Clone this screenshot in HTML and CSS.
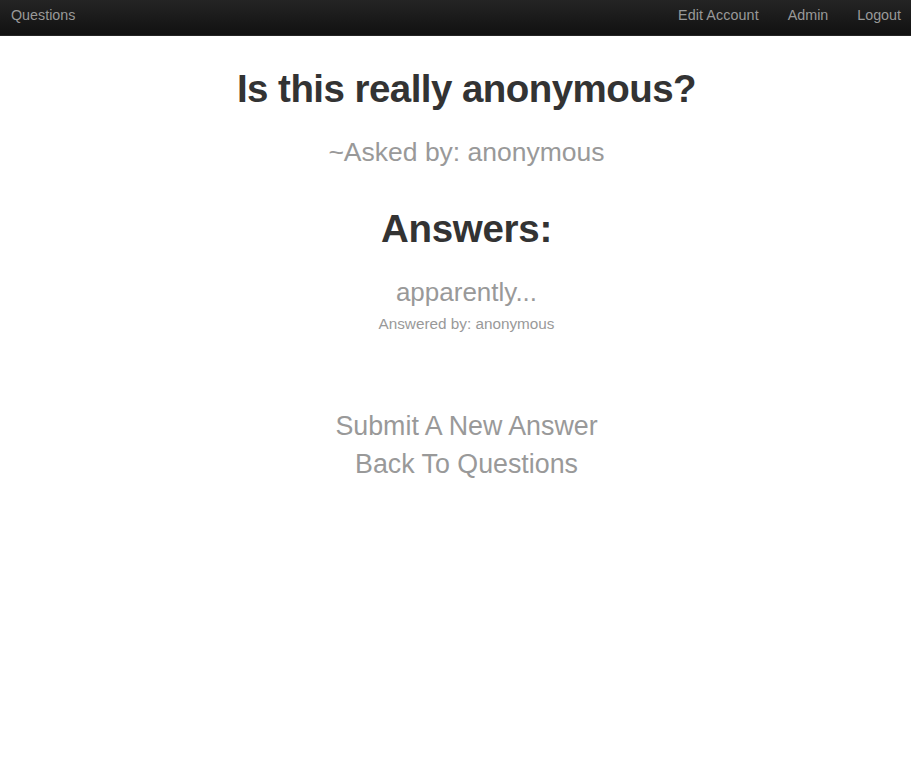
FILE: index.html
```html
<!DOCTYPE html>
<html>
<head>
<meta charset="utf-8">
<link rel="stylesheet" href="styles.css">
</head>
<body>
<div class="navbar">
  <a class="brand" href="#">Questions</a>
  <ul class="nav">
    <li><a href="#">Edit Account</a></li>
    <li><a href="#">Admin</a></li>
    <li><a href="#">Logout</a></li>
  </ul>
</div>
<main class="content">
  <h1 class="title">Is this really anonymous?</h1>
  <h3 class="asked">~Asked by: anonymous</h3>
  <h1 class="answers">Answers:</h1>
  <div class="answer">
    <h3 class="answer-text">apparently...</h3>
    <div class="answer-by">Answered by: anonymous</div>
  </div>
  <div class="links">
    <a href="#">Submit A New Answer</a>
    <a href="#">Back To Questions</a>
  </div>
</main>
</body>
</html>
```
FILE: styles.css
```css
html, body {
  margin: 0;
  padding: 0;
  background: #fff;
  font-family: "Liberation Sans", Arial, sans-serif;
}
.navbar {
  height: 36px;
  background: linear-gradient(#242424, #111111);
  border-bottom: 1px solid #252525;
  box-sizing: border-box;
  display: flex;
  align-items: flex-start;
  justify-content: space-between;
  padding: 5px 10px 0 11px;
}
.navbar a {
  color: #999;
  text-decoration: none;
  font-size: 14.3px;
  line-height: 20px;
  letter-spacing: 0;
}
.nav {
  list-style: none;
  margin: 0;
  padding: 0;
  display: flex;
  gap: 29px;
}
.nav li:first-child a {
  letter-spacing: 0.1px;
}
.content {
  display: flex;
  flex-direction: column;
  align-items: center;
  color: #999;
  padding-left: 22px;
}
.title {
  margin: 31px 0 0;
  font-size: 38.5px;
  line-height: 44px;
  color: #333;
  font-weight: bold;
  letter-spacing: -0.55px;
}
.asked {
  margin: 26px 0 0;
  font-size: 26.5px;
  line-height: 30px;
  font-weight: normal;
  letter-spacing: 0;
}
.answers {
  margin: 40px 0 0;
  font-size: 38.5px;
  line-height: 44px;
  color: #333;
  font-weight: bold;
  letter-spacing: -0.3px;
}
.answer {
  display: flex;
  flex-direction: column;
  align-items: center;
  margin-top: 26px;
}
.answer-text {
  margin: 0;
  font-size: 26px;
  line-height: 30px;
  font-weight: normal;
  letter-spacing: 0;
}
.answer-by {
  margin-top: 7px;
  font-size: 15.3px;
  line-height: 20px;
  letter-spacing: 0;
}
.links {
  margin-top: 73px;
  display: flex;
  flex-direction: column;
  align-items: center;
}
.links a {
  color: #999;
  text-decoration: none;
  font-size: 26.8px;
  line-height: 38px;
  letter-spacing: 0;
}
```
